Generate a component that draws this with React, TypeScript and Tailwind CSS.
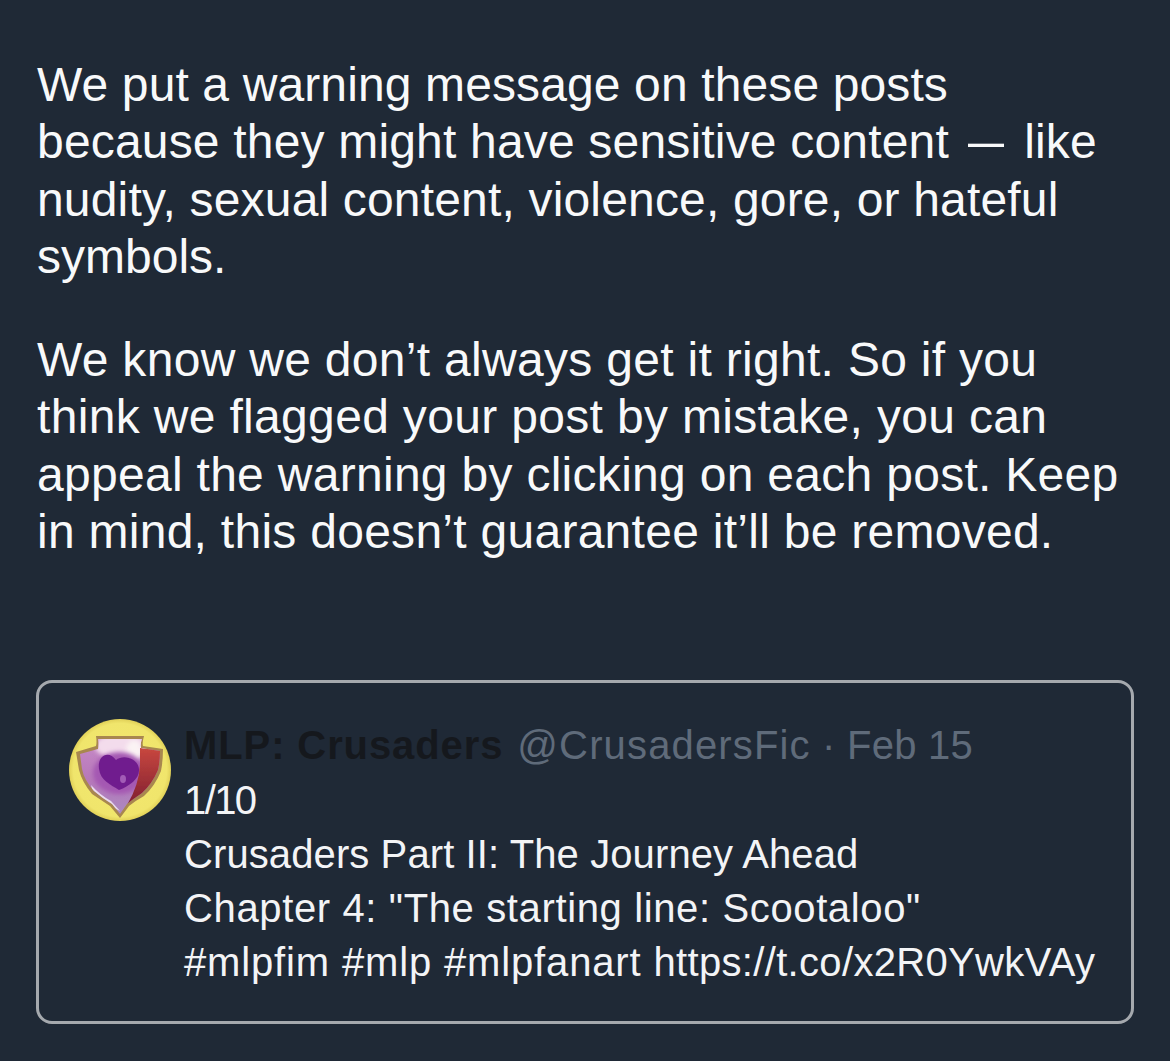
const Avatar = () => (
  <svg viewBox="0 0 102 102" className="w-[102px] h-[102px] shrink-0">
    <defs>
      <radialGradient id="coin" cx="50%" cy="50%" r="52%">
        <stop offset="0%" stopColor="#f4e96e" />
        <stop offset="88%" stopColor="#f0e56c" />
        <stop offset="100%" stopColor="#d9c64e" />
      </radialGradient>
      <linearGradient id="shield" x1="0" y1="0" x2="0" y2="1">
        <stop offset="0%" stopColor="#c98cc8" />
        <stop offset="55%" stopColor="#b678ba" />
        <stop offset="100%" stopColor="#a98cc0" />
      </linearGradient>
      <linearGradient id="wing" x1="0" y1="0" x2="0" y2="1">
        <stop offset="0%" stopColor="#c8473f" />
        <stop offset="100%" stopColor="#7f1f30" />
      </linearGradient>
      <filter id="soft" x="-10%" y="-10%" width="120%" height="120%">
        <feGaussianBlur stdDeviation="0.7" />
      </filter>
      <filter id="softer" x="-30%" y="-30%" width="160%" height="160%">
        <feGaussianBlur stdDeviation="2.2" />
      </filter>
      <clipPath id="inner">
        <path d="M29 20 L73 20 Q71 25 72 29 L91 32 Q91 42 89 51 Q83 65 73 74 Q64 80 58 85 L51 95 L43 85 Q33 79 25 72 Q15 61 13 50 L11 35 L29 30 Q30 25 29 20 Z" />
      </clipPath>
    </defs>
    <circle cx="51" cy="51" r="51" fill="url(#coin)" />
    <path
      filter="url(#soft)"
      d="M27 17 L75 17 Q73 24 74 27 L94 30 Q94 42 92 52 Q86 67 75 77 Q66 82 60 87 L51 99 L41 87 Q32 81 23 75 Q13 63 10 51 L7 33 L27 27 Q28 23 27 17 Z"
      fill="#a8874f"
    />
    <g clipPath="url(#inner)">
      <rect x="0" y="15" width="102" height="85" fill="url(#shield)" />
      <ellipse cx="52" cy="27" rx="26" ry="13" fill="#f3dcec" filter="url(#softer)" />
      <ellipse cx="65" cy="32" rx="8" ry="11" fill="#fbf3f4" filter="url(#softer)" />
      <ellipse cx="50" cy="54" rx="26" ry="21" fill="#a458b2" filter="url(#softer)" />
      <path
        filter="url(#soft)"
        d="M47 41 C40 31 28 36 30 50 C31 61 42 66 50 71 C61 67 71 59 70 50 C69 39 54 35 47 41 Z"
        fill="#701f8e"
      />
      <ellipse cx="54" cy="60" rx="3" ry="4" fill="#a25cb6" filter="url(#soft)" />
      <path filter="url(#soft)" d="M22 66 Q31 76 42 82 L51 92 Q36 85 24 74 Z" fill="#eadcec" />
      <path filter="url(#soft)" d="M71 29 L94 31 L92 54 L72 78 L58 86 Q70 66 71 46 Z" fill="url(#wing)" />
    </g>
  </svg>
);

export default function App() {
  return (
    <div
      className="w-[1170px] h-[1061px] overflow-hidden bg-[#1f2936] text-white pl-[37px] pr-[37px] pt-[56px]"
      style={{ fontFamily: '"Liberation Sans", Arial, sans-serif' }}
    >
      <div className="text-[48px] leading-[57.3px] text-[#f8f9fa] whitespace-nowrap">
        <p className="tracking-[0.12px]">We put a warning message on these posts</p>
        <p className="tracking-[0.18px]">
          because they might have sensitive content{' '}
          <span className="inline-block scale-x-[0.75]">—</span> like
        </p>
        <p className="tracking-[0.17px]">nudity, sexual content, violence, gore, or hateful</p>
        <p>symbols.</p>
        <p className="mt-[46px] tracking-[0.3px]">We know we don’t always get it right. So if you</p>
        <p className="tracking-[0.33px]">think we flagged your post by mistake, you can</p>
        <p className="tracking-[0.29px]">appeal the warning by clicking on each post. Keep</p>
        <p className="tracking-[0.27px]">in mind, this doesn’t guarantee it’ll be removed.</p>
      </div>

      <div className="mt-[120px] -ml-[1px] w-[1098px] h-[344px] rounded-[16px] border-[3px] border-[#a5a9ae] pl-[30px] pt-[36px] flex gap-[13px]">
        <Avatar />
        <div className="text-[40px] leading-[54px] text-[#f3f4f6] whitespace-nowrap -mt-[1px]">
          <p className="tracking-[0.9px] mb-[1px]">
            <span className="font-bold text-[#15181d]">MLP: Crusaders</span>{' '}
            <span className="text-[#5f6b7a] ml-[2px] tracking-[1.15px]">@CrusadersFic</span>
            <span className="text-[#5f6b7a] tracking-[0.25px]"> · Feb 15</span>
          </p>
          <p className="tracking-[-1.6px]">1/10</p>
          <p className="tracking-[0.1px]">Crusaders Part II: The Journey Ahead</p>
          <p className="tracking-[0.63px]">Chapter 4: "The starting line: Scootaloo"</p>
          <p>
            <span className="tracking-[0.85px]">#mlpfim #mlp #mlpfanart </span>
            <span className="tracking-[0.33px]">https://t.co/x2R0YwkVAy</span>
          </p>
        </div>
      </div>
    </div>
  );
}
